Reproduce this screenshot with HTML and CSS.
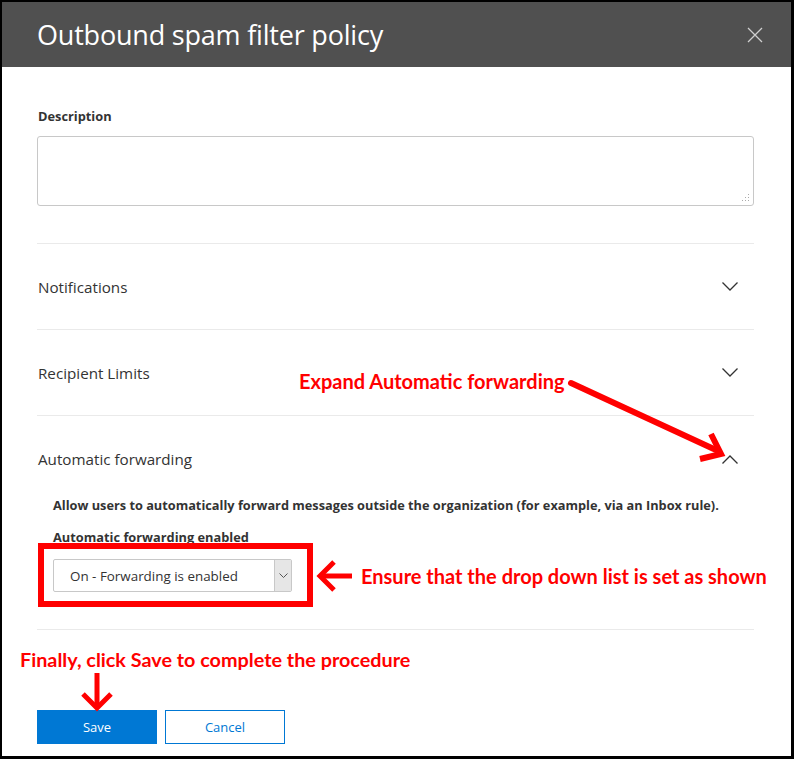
FILE: index.html
```html
<!DOCTYPE html>
<html lang="en">
<head>
  <meta charset="UTF-8">
  <title>Outbound spam filter policy</title>
  <link rel="stylesheet" href="styles.css">
</head>
<body>
  <div class="frame">
    <div class="panel-header">
      <h1>Outbound spam filter policy</h1>
      <svg class="close" width="16" height="16" viewBox="0 0 16 16">
        <path d="M1 1 L15 15 M15 1 L1 15" stroke="#d0d0d0" stroke-width="1.3" fill="none"/>
      </svg>
    </div>

    <div class="panel-body">
      <div class="field">
        <div class="field-label">Description</div>
        <div class="textarea-wrap">
          <textarea class="desc"></textarea>
          <svg class="grip" width="8" height="8" viewBox="0 0 8 8">
            <rect x="6" y="0" width="1" height="1" fill="#aaa"/>
            <rect x="3" y="3" width="1" height="1" fill="#aaa"/>
            <rect x="6" y="3" width="1" height="1" fill="#aaa"/>
            <rect x="0" y="6" width="1" height="1" fill="#aaa"/>
            <rect x="3" y="6" width="1" height="1" fill="#aaa"/>
            <rect x="6" y="6" width="1" height="1" fill="#aaa"/>
          </svg>
        </div>
      </div>

      <div class="section">
        <span>Notifications</span>
        <svg class="chev" width="16" height="9" viewBox="0 0 16 9">
          <polyline points="0.5,0.5 8,8 15.5,0.5" fill="none" stroke="#333" stroke-width="1.3"/>
        </svg>
      </div>

      <div class="section">
        <span>Recipient Limits</span>
        <svg class="chev" width="16" height="9" viewBox="0 0 16 9">
          <polyline points="0.5,0.5 8,8 15.5,0.5" fill="none" stroke="#333" stroke-width="1.3"/>
        </svg>
      </div>

      <div class="section open">
        <div class="section-head">
          <span>Automatic forwarding</span>
          <svg class="chev" width="16" height="9" viewBox="0 0 16 9">
            <polyline points="0.5,8.5 8,1 15.5,8.5" fill="none" stroke="#333" stroke-width="1.3"/>
          </svg>
        </div>
        <div class="section-content">
          <p class="hint">Allow users to automatically forward messages outside the organization (for example, via an Inbox rule).</p>
          <div class="field-label">Automatic forwarding enabled</div>
          <div class="select">
            <span class="select-value">On - Forwarding is enabled</span>
            <span class="select-btn">
              <svg width="9" height="5" viewBox="0 0 9 5">
                <polyline points="0.5,0.5 4.5,4.5 8.5,0.5" fill="none" stroke="#555" stroke-width="1"/>
              </svg>
            </span>
          </div>
        </div>
      </div>

      <div class="actions">
        <button class="btn primary">Save</button>
        <button class="btn">Cancel</button>
      </div>
    </div>

    <!-- annotations drawn over the screenshot -->
    <div class="note note-expand">Expand Automatic forwarding</div>
    <div class="note note-ensure">Ensure that the drop down list is set as shown</div>
    <div class="note note-save">Finally, click Save to complete the procedure</div>

    <svg class="marks" width="794" height="759" viewBox="0 0 794 759">
      <g stroke="#ff0000" fill="none">
        <rect x="41" y="546" width="269" height="58" stroke-width="6"/>
        <line x1="571" y1="383" x2="716" y2="450" stroke-width="6" stroke-linecap="round"/>
        <polyline points="711,434 721,454 700,459" stroke-width="6" stroke-linejoin="miter"/>
        <line x1="322" y1="576" x2="352" y2="576" stroke-width="5"/>
        <polyline points="334,562 320,576 334,590" stroke-width="5"/>
        <line x1="97" y1="673" x2="97" y2="707" stroke-width="5"/>
        <polyline points="83,694 97,708 111,694" stroke-width="5"/>
      </g>
    </svg>
  </div>
</body>
</html>
```

FILE: styles.css
```css
body {
  margin: 0;
  background: #fff;
  font-family: "Open Sans", "Noto Sans", sans-serif;
  color: #333;
}

.frame {
  position: relative;
  width: 794px;
  height: 759px;
  box-sizing: border-box;
  border: solid #000;
  border-width: 2px 3px 3px 2px;
  overflow: hidden;
}

.panel-header {
  height: 65px;
  background: #505050;
  display: flex;
  align-items: center;
  justify-content: space-between;
  padding: 0 28px 0 35px;
}

.panel-header h1 {
  margin: 0;
  color: #fff;
  font-size: 27px;
  font-weight: 400;
  letter-spacing: -0.2px;
}

.panel-body {
  padding: 40px 37px 0 35px;
}

.field-label {
  font-size: 12.8px;
  font-weight: 700;
  color: #333;
  line-height: 18px;
  padding-left: 1px;
}

.textarea-wrap {
  position: relative;
  margin-top: 11px;
}

.desc {
  display: block;
  width: 100%;
  height: 70px;
  box-sizing: border-box;
  border: 1px solid #c8c8c8;
  border-radius: 3px;
  resize: none;
}

.grip {
  position: absolute;
  right: 4px;
  bottom: 4px;
}

.section {
  border-top: 1px solid #eaeaea;
  height: 85px;
  display: flex;
  align-items: center;
  justify-content: space-between;
  font-size: 15.2px;
  color: #333;
  padding: 0 16px 0 1px;
}

.field + .section {
  margin-top: 37px;
}

.section.open {
  display: block;
  height: auto;
  padding: 0;
}

.section-head {
  display: flex;
  align-items: center;
  justify-content: space-between;
  padding: 32px 16px 0 1px;
  height: 22px;
}

.section-content {
  padding: 26px 0 37px 15px;
  border-bottom: 1px solid #eaeaea;
}

.hint {
  margin: 0 0 14px;
  font-size: 12.75px;
  font-weight: 700;
  line-height: 18px;
  padding-left: 1px;
}

.select {
  margin-top: 13px;
  margin-left: 1px;
  width: 239px;
  height: 33px;
  box-sizing: border-box;
  border: 1px solid #c8c8c8;
  border-radius: 2px;
  display: flex;
  align-items: stretch;
  font-size: 13.4px;
}

.select-value {
  flex: 1;
  padding-left: 16px;
  display: flex;
  align-items: center;
}

.select-btn {
  width: 16px;
  background: #e6e6e6;
  border-left: 1px solid #c8c8c8;
  display: flex;
  align-items: center;
  justify-content: center;
}

.actions {
  margin-top: 80px;
  display: flex;
  gap: 8px;
}

.btn {
  width: 120px;
  height: 34px;
  border: 1px solid #0078d4;
  background: #fff;
  color: #0078d4;
  font-family: inherit;
  font-size: 13px;
}

.btn.primary {
  background: #0078d4;
  color: #fff;
}

.note {
  position: absolute;
  color: #ff0000;
  font-family: Lato, "Open Sans", sans-serif;
  font-weight: 700;
  font-size: 20px;
  white-space: nowrap;
}

.note-expand {
  left: 297px;
  top: 367px;
}

.note-ensure {
  left: 359px;
  top: 562px;
}

.note-save {
  left: 18px;
  top: 645px;
  font-size: 19.8px;
}

.marks {
  position: absolute;
  left: -2px;
  top: -2px;
  pointer-events: none;
}
```
